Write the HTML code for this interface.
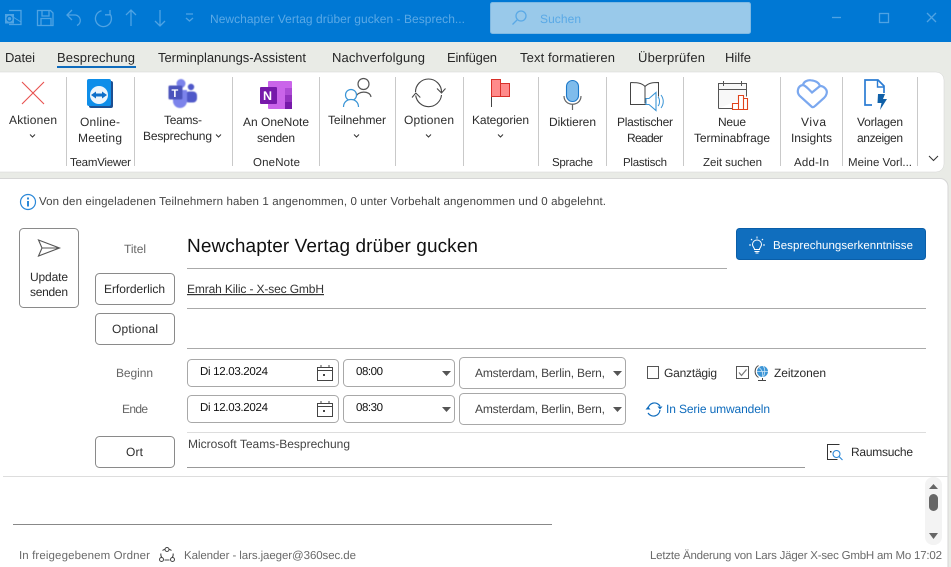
<!DOCTYPE html>
<html lang="de"><head><meta charset="utf-8"><title>Newchapter Vertag drüber gucken</title>
<style>
html,body{margin:0;padding:0;background:#e9ebe6;width:951px;height:567px;overflow:hidden}
svg{display:block}
text{font-family:"Liberation Sans",sans-serif;font-size:12px;fill:#2b2b2b;text-rendering:geometricPrecision}
.s{font-size:11.5px}
.g{fill:#666}.d{fill:#444}.f{fill:#6a6a6a;font-size:11.5px}
.t{font-size:13px;fill:#262626}
.w{fill:#fff;font-size:11.5px}.b{fill:#0f6cbd}
.box{fill:#fff;stroke:#a8a8a8;stroke-width:1}
.btn{fill:#fff;stroke:#8a8a8a;stroke-width:1}
.ln{stroke:#333;fill:none;stroke-width:1}
</style></head><body>
<svg width="951" height="567" viewBox="0 0 951 567" xmlns="http://www.w3.org/2000/svg">
<rect width="951" height="567" fill="#e9ebe6"/>
<!-- title bar -->
<rect width="951" height="42" fill="#0078d4"/>
<g fill="none" stroke="#4fa3e3" stroke-width="1.3">
 <path d="M37.500 10.500h13l2.500 2.500v12.500h-15.500z"/>
 <path d="M42 10.500v5.500h7v-5.500M41 25.500v-7h10v7"/>
 <path d="M72 10l-5 5 5 5M67 15h8.500a5.500 5.500 0 0 1 1.500 10.500"/>
 <path d="M101.500 10.800A8 8 0 1 0 110 14M110 10v4.800h-5"/>
 <path d="M131 26V10M126 15l5-5 5 5M160 10v16M155 21l5 5 5-5"/>
 <path d="M186 14h7M186 18l3.500 3 3.500-3"/>
 <path d="M832 17.500h9"/><rect x="879.500" y="13.500" width="9" height="9"/>
 <path d="M927 13l9 9M936 13l-9 9"/>
</g>
<path d="M9 10.500h12v14H9" fill="none" stroke="#4fa3e3" stroke-width="1.300"/>
<path d="M13 17l8 5" stroke="#4fa3e3" stroke-width="1"/>
<rect x="5" y="14" width="9" height="9.500" fill="#4fa3e3"/>
<circle cx="9.500" cy="18.700" r="2.400" fill="none" stroke="#0078d4" stroke-width="1.300"/>
<text x="210" y="23" textLength="255" style="fill:#5aa9e6">Newchapter Vertag drüber gucken  -  Besprech...</text>
<rect x="490.500" y="2.500" width="260" height="31" rx="2" fill="#99c9ea" stroke="#7fb9e3"/>
<circle cx="521" cy="16" r="5" fill="none" stroke="#5aa9e6" stroke-width="1.300"/><path d="M517 20l-4.500 4.500" stroke="#5aa9e6" stroke-width="1.300"/>
<text x="540" y="23" textLength="41" style="fill:#5aa9e6">Suchen</text>
<!-- tabs -->
<text class="t" x="5" y="62" textLength="30">Datei</text>
<text class="t" x="57" y="62" textLength="78">Besprechung</text>
<rect x="57" y="66" width="79" height="2" fill="#0f6cbd"/>
<text class="t" x="158" y="62" textLength="148">Terminplanungs-Assistent</text>
<text class="t" x="332" y="62" textLength="93">Nachverfolgung</text>
<text class="t" x="447" y="62" textLength="50">Einfügen</text>
<text class="t" x="520" y="62" textLength="95">Text formatieren</text>
<text class="t" x="638" y="62" textLength="67">Überprüfen</text>
<text class="t" x="725" y="62" textLength="26">Hilfe</text>
<!-- ribbon -->
<rect x="-10" y="72" width="954" height="100" rx="8" fill="#fff" stroke="#d4d4d4" stroke-width="0.500"/>
<g stroke="#c9c9c9" stroke-width="1">
<path d="M66.500 77v89M134.500 77v89M232.500 77v89M319.500 77v89M395.500 77v89M463.500 77v89M538.500 77v89M606.500 77v89M683.500 77v89M780.500 77v89M842.500 77v89M917.500 77v89"/>
</g>
<!-- X -->
<path d="M22 82l22 22M44 82l-22 22" stroke="#e8504f" stroke-width="1.100" fill="none"/>
<!-- teamviewer -->
<rect x="89" y="81" width="24" height="27" rx="2" fill="#1d4f91"/>
<rect x="87" y="79" width="24" height="27" rx="2" fill="#0e8ee9"/>
<circle cx="99" cy="95" r="9" fill="#eef5fb"/>
<path d="M91 95l5-3.500v2h6v-2l5 3.500-5 3.500v-2h-6v2z" fill="#0e6fc9"/>
<!-- teams -->
<g filter="url(#bl)">
<circle cx="191" cy="87" r="3.200" fill="#5059c9"/>
<rect x="185" y="91.500" width="12" height="11" rx="4" fill="#5059c9"/>
<circle cx="181" cy="83.500" r="4.500" fill="#7b83eb"/>
<path d="M173 90h14v11a7 7 0 0 1-14 0z" fill="#7b83eb"/>
<rect x="168.500" y="85.500" width="14" height="14" rx="1.500" fill="#4b53bc"/>
</g>
<defs><filter id="bl" x="-10%" y="-10%" width="120%" height="120%"><feGaussianBlur stdDeviation="0.500"/></filter></defs>
<text x="171.500" y="97" style="font-size:11px;font-weight:bold;fill:#fff">T</text>
<!-- onenote -->
<rect x="268" y="81" width="24" height="28" rx="1" fill="#ca64ea"/>
<rect x="285" y="88" width="7" height="7" fill="#ae4bd5"/><rect x="285" y="95" width="7" height="7" fill="#9332bf"/><rect x="285" y="102" width="7" height="7" fill="#7719aa"/>
<rect x="260" y="87" width="17" height="17" rx="1" fill="#7719aa"/>
<text x="263" y="100" style="font-size:12.500px;font-weight:bold;fill:#fff">N</text>
<!-- people -->
<circle cx="363.500" cy="84" r="5.500" fill="none" stroke="#555" stroke-width="1.200"/>
<path d="M356 97c1-6 14-7 15 0" fill="none" stroke="#555" stroke-width="1.200"/>
<circle cx="351" cy="95" r="5.500" fill="#fff" stroke="#3b95d6" stroke-width="1.200"/>
<path d="M343.500 107c0-10 15-10 15 0" fill="#fff" stroke="#3b95d6" stroke-width="1.200"/>
<!-- sync -->
<path d="M415.500 92A13 13 0 0 1 441.500 92M441.500 95A13 13 0 0 1 415.700 95.500" fill="none" stroke="#444" stroke-width="1.100"/>
<path d="M437 88.500l4.500 4.500 4-4.500M412 97.500l3.800-4.500 4.500 4.500" fill="none" stroke="#444" stroke-width="1"/>
<!-- flag -->
<path d="M491.500 107V80" stroke="#444" stroke-width="1"/>
<rect x="491.500" y="79.500" width="9" height="17" fill="#ff8b8b" stroke="#d9302a"/><rect x="500.500" y="83.500" width="9" height="13" fill="#ff8b8b" stroke="#d9302a"/>
<!-- mic -->
<rect x="566.500" y="80.500" width="12" height="21" rx="6" fill="#7fbcec" stroke="#1c78c9" stroke-width="1.100"/>
<path d="M564 96c0 11 17 11 17 0M572.500 104v6" fill="none" stroke="#666" stroke-width="1.200"/>
<!-- reader -->
<path d="M630.500 82.500c5 0 11 0 14.500 4 4-4 9-4 13.500-4v14M630.500 82.500v22h18M645 86.500v17" fill="none" stroke="#444" stroke-width="1"/>
<path d="M646 104.500h3l7 6v-18l-7 6h-3z" fill="#fff" stroke="#3b95d6" stroke-width="1.100"/>
<path d="M658 97c2 2 2 7 0 9M661 95c3 4 3 9 0 13" fill="none" stroke="#3b95d6"/>
<!-- calendar poll -->
<path d="M718.500 108.500v-25h28v13M718.500 89.500h28M723.500 81v5M741.500 81v5M718.500 108.500h14" fill="#f8f8f8" stroke="#555" stroke-width="1"/>
<path d="M732.500 109.500v-6h6v6zM738.500 109.500v-14h5v14zM743.500 109.500v-11h4v11z" fill="#fff" stroke="#e0431b" stroke-width="1.100"/>
<!-- viva -->
<g fill="none" stroke="#7ba8ef" stroke-width="2.200">
<path d="M812 107L799.800 96C796 92 798 85.500 803 85C803.500 81.500 808 79.800 811 80.300C816 80.800 819 83 820 86C824 86 828 90 826.500 94C826 96 825 97 824 98L815 106C814 107 813 107.500 812 107Z"/>
<path d="M803 85C805 85.500 806.500 87 808.500 89L812 92.500L820 86"/>
</g>
<!-- template -->
<path d="M872 105h-7V80h13l6 6v7" fill="none" stroke="#2b7cd3" stroke-width="1.700"/>
<path d="M877.500 80v7h6" fill="none" stroke="#2b7cd3" stroke-width="1.400"/>
<path d="M878 94h7l-2 5h4l-7 11 1.500-7h-4z" fill="#1060a8"/>
<!-- ribbon text -->
<text x="9" y="124" textLength="48">Aktionen</text><path d="M30 134.500l2.500 2.500 2.500-2.500" class="ln"/>
<text x="80" y="126" textLength="40">Online-</text><text x="78" y="142" textLength="44">Meeting</text>
<text class="s" x="70" y="166" textLength="61">TeamViewer</text>
<text x="164" y="124" textLength="38">Teams-</text><text x="143" y="140" textLength="69">Besprechung</text><path d="M216 134.500l2.500 2.500 2.500-2.500" class="ln"/>
<text x="243" y="126" textLength="66">An OneNote</text><text x="257" y="142" textLength="38">senden</text>
<text class="s" x="253" y="166" textLength="47">OneNote</text>
<text x="328" y="124" textLength="58">Teilnehmer</text><path d="M354 134.500l2.500 2.500 2.500-2.500" class="ln"/>
<text x="404" y="124" textLength="50">Optionen</text><path d="M426 134.500l2.500 2.500 2.500-2.500" class="ln"/>
<text x="472" y="124" textLength="57">Kategorien</text><path d="M498 134.500l2.500 2.500 2.500-2.500" class="ln"/>
<text x="549" y="126" textLength="47">Diktieren</text><text class="s" x="552" y="166" textLength="41">Sprache</text>
<text x="617" y="126" textLength="56">Plastischer</text><text x="627" y="142" textLength="36">Reader</text>
<text class="s" x="623" y="166" textLength="44">Plastisch</text>
<text x="718" y="126" textLength="28">Neue</text><text x="694" y="142" textLength="76">Terminabfrage</text>
<text class="s" x="703" y="166" textLength="59">Zeit suchen</text>
<text x="801" y="126" textLength="25">Viva</text><text x="791" y="142" textLength="41">Insights</text>
<text class="s" x="794" y="166" textLength="35">Add-In</text>
<text x="857" y="126" textLength="46">Vorlagen</text><text x="857" y="142" textLength="46">anzeigen</text>
<text class="s" x="848" y="166" textLength="64">Meine Vorl...</text>
<path d="M929 156l4.500 4.500 4.500-4.500" class="ln" stroke-width="1.100"/>
<!-- content -->
<rect x="-10" y="178.500" width="958" height="400" rx="8" fill="#fff" stroke="#d6d6d6"/>
<circle cx="28" cy="202" r="7.500" fill="#fff" stroke="#2b88d8" stroke-width="1.200"/>
<rect x="27" y="201" width="2" height="5.500" fill="#2b88d8"/><rect x="27" y="197.500" width="2" height="2" fill="#2b88d8"/>
<text class="d" style="font-size:11.500px" x="39" y="205" textLength="567">Von den eingeladenen Teilnehmern haben 1 angenommen, 0 unter Vorbehalt angenommen und 0 abgelehnt.</text>
<rect class="btn" x="19.500" y="228.500" width="59" height="79" rx="4"/>
<path d="M38.500 240l21 8-21 8 3.500-8zM42 248h17" fill="none" stroke="#555" stroke-width="1.100"/>
<text x="30" y="281" textLength="38">Update</text><text x="30" y="296" textLength="38">senden</text>
<text class="g" x="124" y="253" textLength="22">Titel</text>
<text x="187" y="252" textLength="291" style="font-size:19px;fill:#111">Newchapter Vertag drüber gucken</text>
<path d="M187 268.500h540" stroke="#aaa"/>
<rect x="736.500" y="228.500" width="189" height="31" rx="3" fill="#106ebe" stroke="#0a5ea8"/>
<g fill="none" stroke="#fff" stroke-width="1"><path d="M754.500 249.500c0-2-2-2.500-2-5a4.500 4.500 0 0 1 9 0c0 2.500-2 3-2 5zM754.500 251.500h5M755.500 253h3M757 236.500v2M751 239l1.200 1.200M763 239l-1.200 1.200M749 245h2M763 245h2"/></g>
<text class="w" x="773" y="249" textLength="140">Besprechungserkenntnisse</text>
<rect class="btn" x="95.500" y="273.500" width="79" height="31" rx="4"/>
<text x="104" y="293" textLength="61">Erforderlich</text>
<text x="187" y="293" textLength="137" text-decoration="underline" style="fill:#333">Emrah Kilic - X-sec GmbH</text>
<path d="M187 308.500h739" stroke="#aaa"/>
<rect class="btn" x="95.500" y="313.500" width="79" height="31" rx="4"/>
<text x="112" y="333" textLength="46">Optional</text>
<path d="M187 348.500h739" stroke="#aaa"/>
<text class="g" x="116" y="377" textLength="37">Beginn</text>
<text class="g" x="122" y="413" textLength="26">Ende</text>
<!-- date rows -->
<rect class="box" x="187.500" y="359.500" width="151" height="27" rx="4"/>
<rect class="box" x="187.500" y="395.500" width="151" height="27" rx="4"/>
<rect class="box" x="343.500" y="359.500" width="111" height="27" rx="4"/>
<rect class="box" x="343.500" y="395.500" width="111" height="27" rx="4"/>
<rect class="box" x="459.500" y="357.500" width="166" height="31" rx="4"/>
<rect class="box" x="459.500" y="393.500" width="166" height="31" rx="4"/>
<text class="s" x="200" y="375" textLength="68" style="fill:#111">Di 12.03.2024</text>
<text class="s" x="200" y="411" textLength="68" style="fill:#111">Di 12.03.2024</text>
<text class="s" x="356" y="375" textLength="27" style="fill:#111">08:00</text>
<text class="s" x="356" y="411" textLength="27" style="fill:#111">08:30</text>
<g fill="none" stroke="#444"><path d="M317.500 367.500h15v13h-15zM317.500 370.500h15M321 365v3M329 365v3M317.500 403.500h15v13h-15zM317.500 406.500h15M321 401v3M329 401v3"/></g>
<rect x="323" y="374" width="2" height="2" fill="#444"/><rect x="323" y="410" width="2" height="2" fill="#444"/>
<path d="M442 371h9l-4.500 5zM442 407h9l-4.500 5zM613 371h9l-4.500 5zM613 407h9l-4.500 5z" fill="#555"/>
<text class="d" x="475" y="377" textLength="130">Amsterdam, Berlin, Bern,</text>
<text class="d" x="475" y="413" textLength="130">Amsterdam, Berlin, Bern,</text>
<rect x="647.500" y="366.500" width="11" height="12" fill="#fff" stroke="#555"/>
<text x="664" y="377" textLength="53">Ganztägig</text>
<rect x="736.500" y="366.500" width="12" height="12" fill="#fff" stroke="#555"/>
<path d="M739 372.500l2.500 3 5-6" fill="none" stroke="#777" stroke-width="1.200"/>
<circle cx="762.500" cy="371.500" r="5.500" fill="#3b95d6"/><path d="M759 367.500c2.500 2 4.500 5 3.500 9.500M757 371.500h11M763 366c2 2 2.500 7 .5 10.500" stroke="#cfe6f7" fill="none" stroke-width=".8"/>
<path d="M758.500 365.500a7 7 0 0 0 0 12M758 380.500h8M762.500 378v2.500" fill="none" stroke="#444"/>
<text x="774" y="377" textLength="52">Zeitzonen</text>
<path d="M648 409a6.500 6.500 0 0 1 12-3M660 410a6.500 6.500 0 0 1-12 3" fill="none" stroke="#0f6cbd" stroke-width="1.200"/>
<path d="M657.500 406.500h5l-2.500 3zM645.500 409.500h5l-2.500-3z" fill="#0f6cbd"/>
<text x="666" y="413" textLength="104" class="b">In Serie umwandeln</text>
<path d="M187 432.500h739" stroke="#ddd"/>
<rect class="btn" x="95.500" y="436.500" width="79" height="31" rx="4"/>
<text x="126" y="456" textLength="17">Ort</text>
<text class="d" x="188" y="448" textLength="162">Microsoft Teams-Besprechung</text>
<path d="M187 467.500h618" stroke="#999"/>
<path d="M839.500 444.500h-12v15h10" fill="none" stroke="#333"/><rect x="830" y="451" width="1.500" height="1.500" fill="#333"/>
<circle cx="836.500" cy="454" r="3.500" fill="none" stroke="#2b88d8" stroke-width="1.100"/><path d="M839 456.500l3.500 3.500" stroke="#2b88d8" stroke-width="1.100"/>
<text x="851" y="456" textLength="62">Raumsuche</text>
<path d="M3 476.500h945" stroke="#ddd"/>
<rect x="925" y="477" width="17" height="68" rx="8" fill="#f3f3f3"/>
<path d="M929 489l4.500-5 4.500 5zM929 533l4.500 6 4.500-6z" fill="#666"/>
<rect x="929" y="494" width="9" height="17" rx="4.500" fill="#666"/>
<path d="M13 524.500h539" stroke="#888"/>
<text class="f" x="19" y="559" textLength="131">In freigegebenem Ordner</text>
<path d="M162.500 550.500A7 7 0 0 1 171.500 550.500M160.800 553.500A7 7 0 0 0 162 558M172 558A7 7 0 0 0 173.200 553.500M164.500 560h5" fill="none" stroke="#444"/>
<g fill="#fff" stroke="#444"><circle cx="167" cy="549.500" r="2"/><circle cx="161.500" cy="559.500" r="2"/><circle cx="172.500" cy="559.500" r="2"/></g>
<text class="f" x="184" y="559" textLength="172">Kalender - lars.jaeger@360sec.de</text>
<text class="f" x="650" y="559" textLength="292">Letzte Änderung von Lars Jäger X-sec GmbH am Mo 17:02</text>
</svg>
</body></html>
